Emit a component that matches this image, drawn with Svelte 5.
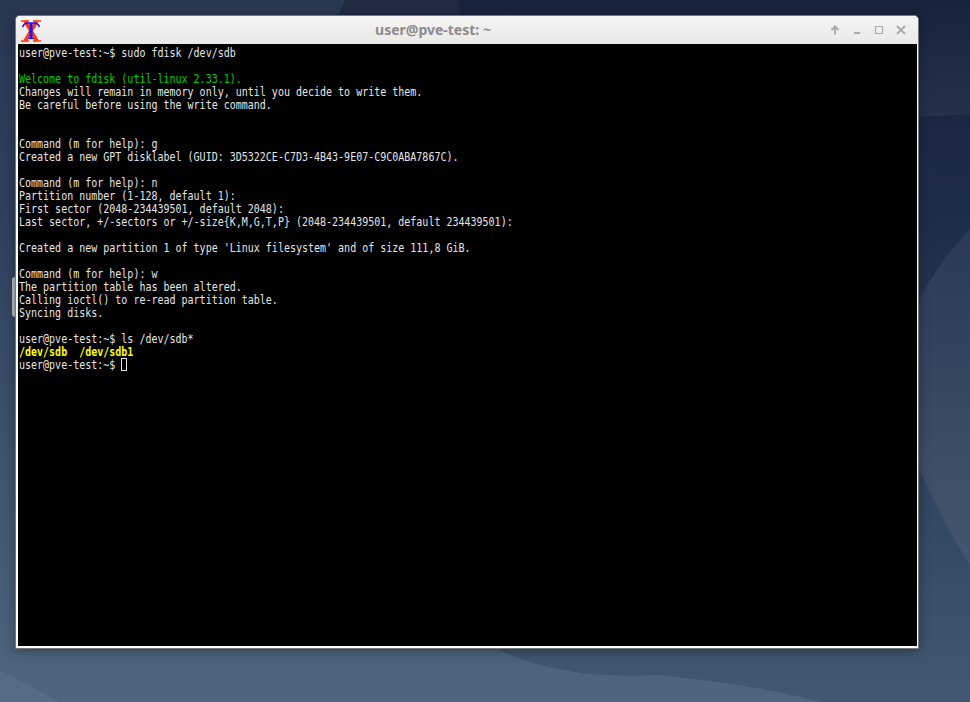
<script>
	const lines = [
		{ text: 'user@pve-test:~$ sudo fdisk /dev/sdb' },
		{ text: '' },
		{ text: 'Welcome to fdisk (util-linux 2.33.1).', kind: 'green' },
		{ text: 'Changes will remain in memory only, until you decide to write them.' },
		{ text: 'Be careful before using the write command.' },
		{ text: '' },
		{ text: '' },
		{ text: 'Command (m for help): g' },
		{ text: 'Created a new GPT disklabel (GUID: 3D5322CE-C7D3-4B43-9E07-C9C0ABA7867C).' },
		{ text: '' },
		{ text: 'Command (m for help): n' },
		{ text: 'Partition number (1-128, default 1):' },
		{ text: 'First sector (2048-234439501, default 2048):' },
		{ text: 'Last sector, +/-sectors or +/-size{K,M,G,T,P} (2048-234439501, default 234439501):' },
		{ text: '' },
		{ text: "Created a new partition 1 of type 'Linux filesystem' and of size 111,8 GiB." },
		{ text: '' },
		{ text: 'Command (m for help): w' },
		{ text: 'The partition table has been altered.' },
		{ text: 'Calling ioctl() to re-read partition table.' },
		{ text: 'Syncing disks.' },
		{ text: '' },
		{ text: 'user@pve-test:~$ ls /dev/sdb*' },
		{ text: '/dev/sdb  /dev/sdb1', kind: 'yellow' }
	];
</script>

<div class="desktop">
	<svg class="wallpaper" viewBox="0 0 970 702" aria-hidden="true">
		<defs>
			<linearGradient id="base" x1="0" y1="0" x2="0" y2="1">
				<stop offset="0" stop-color="#17233b" />
				<stop offset="0.3" stop-color="#1d2c49" />
				<stop offset="0.7" stop-color="#33465f" />
				<stop offset="1" stop-color="#435873" />
			</linearGradient>
			<linearGradient id="band" x1="0" y1="0" x2="0" y2="1">
				<stop offset="0" stop-color="#fff" stop-opacity="0" />
				<stop offset="1" stop-color="#fff" stop-opacity="0.05" />
			</linearGradient>
		</defs>
		<rect width="970" height="702" fill="url(#base)" />
		<path d="M458 0L480 130Q700 130 970 114V0Z" fill="url(#band)" />
		<path d="M345 0H458L480 130H300Z" fill="#fff" opacity="0.04" />
		<path d="M0 0H345L300 110Q180 500 495 648Q560 680 656 675Q760 685 820 702H0Z" fill="#9db8dc" opacity="0.14" />
		<path d="M970 229Q930 270 900 340Q880 420 970 565Z" fill="#fff" opacity="0.06" />
		<path d="M0 670L59 702H0Z" fill="#fff" opacity="0.05" />
	</svg>

	<div class="handle"></div>

	<section class="window">
		<header class="titlebar">
			<svg class="app-icon" viewBox="0 0 22 22" aria-hidden="true">
				<path d="M1 1H9M13 1H21M1 21H9M13 21H21" stroke="#ff3a14" stroke-width="1.6" fill="none" />
				<path d="M5 1L17 21M17 1L5 21" stroke="#ff3a14" stroke-width="3.600" fill="none" />
				<path d="M2.500 7Q4 3 8 3H14Q18 3 19.500 7" stroke="#1414ff" stroke-width="1.600" fill="none" />
				<path d="M11 3V18" stroke="#1414ff" stroke-width="3" />
				<path d="M8 18.500H14" stroke="#1414ff" stroke-width="1.200" />
			</svg>
			<h1>user@pve-test: ~</h1>
			<div class="controls">
				<svg viewBox="0 0 10 10" aria-hidden="true"><path d="M5 9.500V2M1.500 5L5 1.500L8.500 5" /></svg>
				<svg viewBox="0 0 10 10" aria-hidden="true"><path d="M2 8H8" /></svg>
				<svg viewBox="0 0 10 10" aria-hidden="true"><path class="thin" d="M1.500 1.500H8.500V8.500H1.500Z" /></svg>
				<svg viewBox="0 0 10 10" aria-hidden="true"><path d="M1 1L9 9M9 1L1 9" /></svg>
			</div>
		</header>
		<pre class="terminal">{#each lines as line}<div class={line.kind ?? ''}><span class="text">{line.text || ' '}</span></div>{/each}<div><span class="text">user@pve-test:~$ </span><span class="cursor"></span></div></pre>
	</section>
</div>

<style>
	:global(body) {
		margin: 0;
		background: #1d2c49;
	}

	.desktop {
		height: 702px;
		overflow: hidden;
		position: relative;
		width: 970px;
	}

	.wallpaper {
		display: block;
		height: 702px;
		inset: 0;
		position: absolute;
		width: 970px;
	}

	.handle {
		background: #b4bbc3;
		border-radius: 3px 0 0 3px;
		height: 40px;
		left: 12px;
		position: absolute;
		top: 277px;
		width: 3px;
	}

	.window {
		background: #fff;
		border: 1px solid #777;
		border-radius: 5px 5px 0 0;
		box-shadow: 0 2px 12px rgb(0 0 0 / 35%);
		box-sizing: border-box;
		display: flex;
		flex-direction: column;
		height: 634px;
		left: 15px;
		position: absolute;
		top: 15px;
		width: 904px;
	}

	.titlebar {
		align-items: center;
		background: linear-gradient(#f6f5f4, #e9e9e8);
		border-radius: 4px 4px 0 0;
		display: flex;
		flex: none;
		height: 28px;
		justify-content: space-between;
		position: relative;
	}

	.app-icon {
		height: 22px;
		margin-left: 4px;
		margin-top: 2px;
		width: 22px;
	}

	h1 {
		color: #8c8c8c;
		font-family: 'Noto Sans', sans-serif;
		font-size: 14px;
		font-weight: 700;
		left: 0;
		line-height: 30px;
		margin: 0;
		padding-right: 68px;
		position: absolute;
		right: 0;
		text-align: center;
	}

	.controls {
		align-items: center;
		display: flex;
		gap: 12px;
		margin-right: 12px;
	}

	.controls svg {
		fill: none;
		height: 10px;
		stroke: #ababab;
		stroke-width: 2;
		width: 10px;
	}

	.controls .thin {
		stroke-width: 1.200;
	}

	.terminal {
		background: #000;
		color: #e5e5e5;
		flex: 1;
		font-family: 'DejaVu Sans Mono', 'Liberation Mono', monospace;
		font-size: 10px;
		line-height: 13px;
		margin: 0 1px 2px 2px;
		overflow: hidden;
		padding: 2px 1px;
	}

	.terminal div {
		height: 13px;
	}

	.text {
		display: inline-block;
		transform: scaleY(1.18) translateY(0.5px);
		white-space: pre;
	}

	.green {
		color: #00cd00;
	}

	.yellow {
		color: #ffff00;
		font-weight: 700;
	}

	.cursor {
		border: 1px solid #e5e5e5;
		box-sizing: border-box;
		display: inline-block;
		height: 13px;
		vertical-align: top;
		width: 6px;
	}
</style>
